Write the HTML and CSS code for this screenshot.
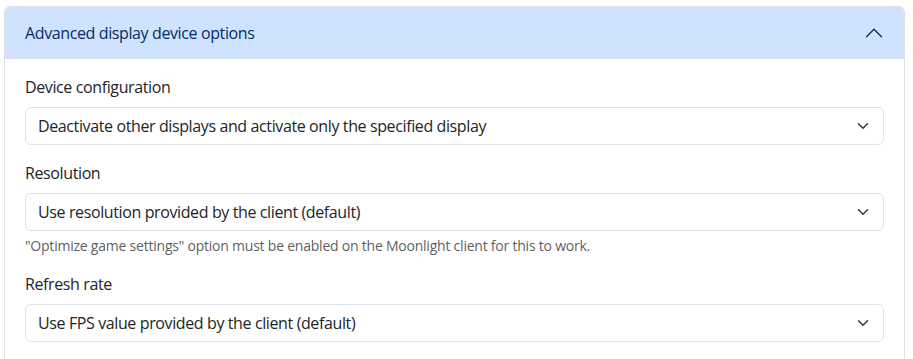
FILE: index.html
```html
<!DOCTYPE html>
<html lang="en">
<head>
    <meta charset="UTF-8">
    <meta name="viewport" content="width=device-width, initial-scale=1.0">
    <title>Advanced display device options</title>
    <link rel="stylesheet" href="styles.css">
</head>
<body>

    <div class="accordion">
        <div class="accordion-item">
            <h2 class="accordion-header">
                <button class="accordion-button" type="button">
                    <span>Advanced display device options</span>
                    <svg class="accordion-icon" viewBox="0 0 16 16" fill="none" stroke="#052c65" stroke-linecap="round" stroke-linejoin="round">
                        <path d="M2 11L8 5L14 11"/>
                    </svg>
                </button>
            </h2>
            <div class="accordion-body">
                <div class="field">
                    <label class="form-label" for="device-config">Device configuration</label>
                    <select class="form-select" id="device-config">
                        <option>Deactivate other displays and activate only the specified display</option>
                    </select>
                </div>

                <div class="field">
                    <label class="form-label" for="resolution">Resolution</label>
                    <select class="form-select" id="resolution">
                        <option>Use resolution provided by the client (default)</option>
                    </select>
                    <div class="form-text">"Optimize game settings" option must be enabled on the Moonlight client for this to work.</div>
                </div>

                <div class="field">
                    <label class="form-label" for="refresh-rate">Refresh rate</label>
                    <select class="form-select" id="refresh-rate">
                        <option>Use FPS value provided by the client (default)</option>
                    </select>
                </div>
            </div>
        </div>
    </div>

</body>
</html>
```

FILE: styles.css
```css
body {
    font-family: "Open Sans", "Noto Sans", sans-serif;
    font-size: 16px;
    line-height: 1.5;
    letter-spacing: -0.024em;
    color: #212529;
    background-color: #fff;
    margin: 6px 8px 0 4px;
}
.accordion-item {
    border: 1px solid #dee2e6;
    border-radius: 6px;
    background: #fff;
    overflow: hidden;
}
.accordion-header {
    margin: 0;
    font-size: 16px;
    font-weight: 400;
}
.accordion-button {
    display: flex;
    align-items: center;
    justify-content: space-between;
    width: 100%;
    padding: 14px 20px;
    border: 0;
    background-color: #cfe2ff;
    color: #052c65;
    font: inherit;
    letter-spacing: inherit;
    line-height: 24px;
    text-align: left;
    box-shadow: inset 0 -1px 0 #dee2e6;
}
.accordion-icon {
    width: 20px;
    height: 20px;
    flex-shrink: 0;
}
.accordion-body {
    padding: 16px 20px;
}
.field {
    margin-bottom: 16px;
}
.form-label {
    display: block;
    margin-bottom: 8px;
}
.form-select {
    display: block;
    width: 100%;
    height: 38px;
    padding: 6px 36px 6px 12px;
    font: inherit;
    letter-spacing: inherit;
    color: #212529;
    background-color: #fff;
    background-image: url("data:image/svg+xml,%3csvg xmlns='http://www.w3.org/2000/svg' viewBox='0 0 16 16'%3e%3cpath fill='none' stroke='%23343a40' stroke-linecap='round' stroke-linejoin='round' stroke-width='2' d='m2 5 6 6 6-6'/%3e%3c/svg%3e");
    background-repeat: no-repeat;
    background-position: right 12px center;
    background-size: 16px 12px;
    border: 1px solid #dee2e6;
    border-radius: 6px;
    appearance: none;
}
.form-text {
    margin-top: 4px;
    font-size: 14px;
    letter-spacing: -0.016em;
    color: rgba(33, 37, 41, 0.75);
}
```
